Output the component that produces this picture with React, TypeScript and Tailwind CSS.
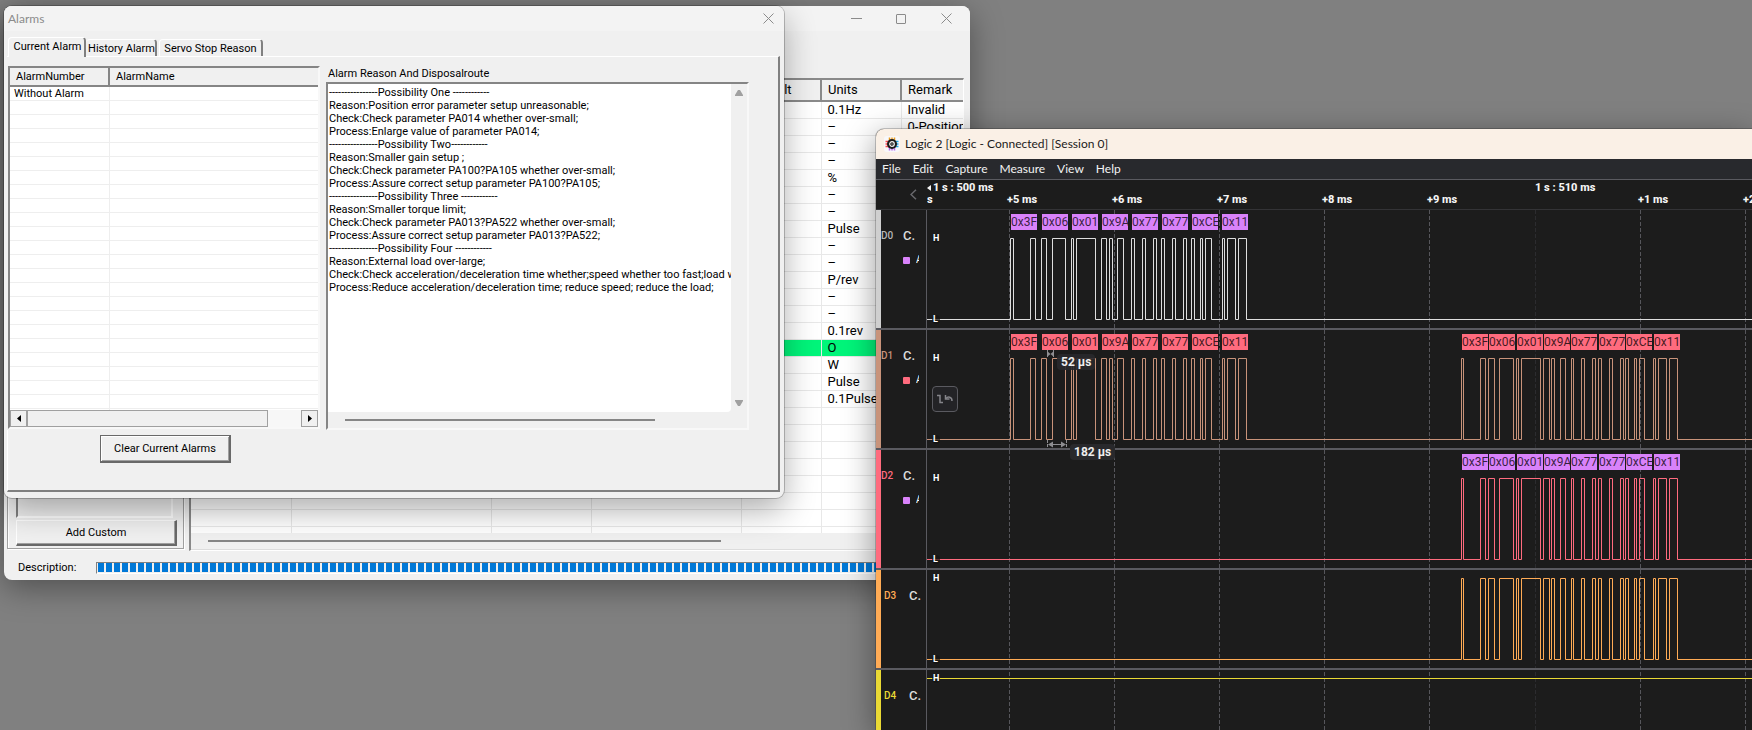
import React from "react";

const UI = "font-['Roboto','Liberation_Sans',sans-serif]";
const CAPTION = "font-['Lato','Open_Sans',sans-serif]";

/* ---------- shared window pieces ---------- */

function CloseIcon() {
  return (
    <svg width="11" height="11" viewBox="0 0 11 11" stroke="#8b8b8b" strokeWidth="1" fill="none" aria-hidden="true">
      <path d="M.5.5l10 10M10.5.5l-10 10" />
    </svg>
  );
}

/* ---------- parameter window ---------- */

const units = [
  "0.1Hz", "–", "–", "–", "%", "–", "–", "Pulse", "–", "–", "P/rev", "–", "–",
  "0.1rev", "O", "W", "Pulse", "0.1Pulse",
];
const remarks = ["Invalid", "0-Position"];
const paramHead = ["No.", "Name", "Value", "Range", "Default", "Units", "Remark"];

function ParameterTable() {
  return (
    <div className="flex min-w-0 flex-1 flex-col overflow-hidden border-t-2 border-r border-b border-l-2 border-t-[#8a8a8a] border-r-white border-b-white border-l-[#8a8a8a] bg-white">
      <div className="min-h-0 flex-1 overflow-hidden">
        <table className="w-[811px] table-fixed border-collapse text-[13px] leading-4 text-black">
          <colgroup>
            <col className="w-[100px]" />
            <col className="w-[200px]" />
            <col className="w-[100px]" />
            <col className="w-[150px]" />
            <col className="w-[80px]" />
            <col className="w-[80px]" />
            <col className="w-[101px]" />
          </colgroup>
          <thead>
            <tr className="h-[21px]">
              {paramHead.map((h) => (
                <th
                  key={h}
                  className={`overflow-hidden border-r-2 border-b-2 border-[#8a8a8a] bg-[#f0f0f0] p-0 text-left font-normal whitespace-nowrap ${h === "Default" ? "pl-2" : "pl-1.5"}`}
                >
                  {h}
                </th>
              ))}
            </tr>
          </thead>
          <tbody>
            {Array.from({ length: 26 }, (_, r) => (
              <tr key={r} className={r === 14 ? "h-[17px] bg-[#00f57a]" : "h-[17px]"}>
                {paramHead.map((h, c) => (
                  <td
                    key={h}
                    className="overflow-hidden border-r border-b border-[#e8e8e8] p-0 pl-1.5 whitespace-nowrap"
                  >
                    {c === 5 ? units[r] : c === 6 ? remarks[r] : null}
                  </td>
                ))}
              </tr>
            ))}
          </tbody>
        </table>
      </div>
      <div className="flex h-[17px] items-center border-b border-[#dcdcdc] bg-[#f0f0f0] pl-[17px]">
        <div className="h-0.5 w-[513px] bg-[#868686]" />
      </div>
    </div>
  );
}

function ParameterWindow() {
  return (
    <section
      aria-label="Parameters"
      className={`absolute top-1.5 left-1 flex h-[574px] w-[966px] flex-col overflow-hidden rounded-lg bg-[#f0f0f0] shadow-[0_8px_32px_rgba(0,0,0,0.38)] ${UI}`}
    >
      <header className="flex h-[25px] items-center justify-end gap-[34px] bg-[#f3f3f3] pr-[18px]">
        <button aria-label="Minimize" className="flex h-6 w-[11px] items-center">
          <span className="h-px w-[11px] bg-[#8b8b8b]" />
        </button>
        <button aria-label="Maximize" className="flex h-6 w-[11px] items-center">
          <span className="h-2.5 w-2.5 rounded-[1px] border border-[#8b8b8b]" />
        </button>
        <button aria-label="Close" className="flex h-6 w-[11px] items-center">
          <CloseIcon />
        </button>
      </header>
      <div className="flex min-h-0 flex-1 gap-[5px] pt-[47px] pr-1.5 pl-[3px]">
        <aside className="mb-0.5 flex w-[177px] flex-col border border-[#a0a0a0] px-2 pb-0.5 shadow-[inset_1px_1px_0_#fff,1px_1px_0_#fff]">
          <div className="mr-0.5 flex-1 border-2 border-t-[#808080] border-r-white border-b-white border-l-[#808080] bg-[#f0f0f0]" />
          <button className="mt-0.5 h-[26px] w-[161px] border-t border-r-2 border-b-2 border-l border-t-white border-r-[#696969] border-b-[#696969] border-l-white pt-px text-[11px] shadow-[inset_-1px_-1px_0_#a0a0a0]">
            Add Custom
          </button>
        </aside>
        <ParameterTable />
      </div>
      <footer className="flex h-[29px] items-center pt-1 pr-1.5 pl-3.5">
        <label htmlFor="progress" className="w-[78px] pt-px text-[11px]">
          Description:
        </label>
        <div
          id="progress"
          role="progressbar"
          aria-label="Description"
          className="flex h-3 flex-1 items-center border border-t-[#808080] border-r-white border-b-white border-l-[#808080] px-px"
        >
          <div className="h-[9px] flex-1 bg-[repeating-linear-gradient(90deg,#0078d7_0px_6px,#f0f0f0_6px_8px)]" />
        </div>
      </footer>
    </section>
  );
}

/* ---------- alarms window ---------- */

const alarmText = `----------------Possibility One ------------
Reason:Position error parameter setup unreasonable;
Check:Check parameter PA014 whether over-small;
Process:Enlarge value of parameter PA014;
----------------Possibility Two------------
Reason:Smaller gain setup ;
Check:Check parameter PA100?PA105 whether over-small;
Process:Assure correct setup parameter PA100?PA105;
----------------Possibility Three ------------
Reason:Smaller torque limit;
Check:Check parameter PA013?PA522 whether over-small;
Process:Assure correct setup parameter PA013?PA522;
----------------Possibility Four ------------
Reason:External load over-large;
Check:Check acceleration/deceleration time whether;speed whether too fast;load whether too large;
Process:Reduce acceleration/deceleration time; reduce speed; reduce the load;`;

function AlarmList() {
  return (
    <div className="flex h-[363px] w-[312px] flex-col border-2 border-t-[#858585] border-r-[#f8f8f8] border-b-[#f8f8f8] border-l-[#858585] bg-white">
      <div className="min-h-0 flex-1 overflow-hidden">
        <table className="w-full table-fixed border-collapse text-[11px] leading-[13px]">
          <colgroup>
            <col className="w-[99px]" />
            <col />
          </colgroup>
          <thead>
            <tr className="h-[18px] border-b-2 border-[#858585] bg-[#f0f0f0]">
              <th className="border-r-2 border-[#858585] p-0 pl-1.5 text-left font-normal">AlarmNumber</th>
              <th className="p-0 pl-1.5 text-left font-normal">AlarmName</th>
            </tr>
          </thead>
          <tbody>
            {Array.from({ length: 24 }, (_, r) => (
              <tr key={r} className="h-3.5">
                <td className="border-r border-b border-[#eeeeee] p-0 pl-1 whitespace-nowrap">
                  {r === 0 ? "Without Alarm" : null}
                </td>
                <td className="border-b border-[#eeeeee] p-0" />
              </tr>
            ))}
          </tbody>
        </table>
      </div>
      <div className="flex h-[17px] bg-[#f7f7f7]">
        <button aria-label="Scroll left" className="flex w-[17px] items-center justify-center border border-[#a0a0a0] bg-[#f0f0f0]">
          <svg width="4" height="7" viewBox="0 0 4 7" aria-hidden="true">
            <path d="M4 0v7L0 3.500z" />
          </svg>
        </button>
        <div className="w-[241px] border border-[#a0a0a0] bg-[#f0f0f0]" />
        <button aria-label="Scroll right" className="ml-auto flex w-[17px] items-center justify-center border border-[#a0a0a0] bg-[#f0f0f0]">
          <svg width="4" height="7" viewBox="0 0 4 7" aria-hidden="true">
            <path d="M0 0v7l4-3.500z" />
          </svg>
        </button>
      </div>
    </div>
  );
}

function AlarmReason() {
  return (
    <div className="flex w-[423px] flex-col text-[11px]">
      <label htmlFor="reason" className="h-4 pt-px pl-0.5 leading-[14px]">
        Alarm Reason And Disposalroute
      </label>
      <div className="flex h-[348px] flex-col border-2 border-t-[#858585] border-r-[#f8f8f8] border-b-[#f8f8f8] border-l-[#858585] bg-[#f0f0f0]">
        <div className="flex min-h-0 flex-1">
          <textarea
            id="reason"
            readOnly
            wrap="off"
            defaultValue={alarmText}
            className="min-w-0 flex-1 resize-none overflow-hidden rounded-br bg-white pt-0.5 pr-0.5 pl-px text-[11px] leading-[13px] text-black outline-none"
          />
          <div className="flex w-4 flex-col items-center justify-between pt-1.5 pb-1.5">
            <svg width="8" height="6" viewBox="0 0 8 6" fill="#a0a0a0" aria-hidden="true">
              <path d="M3 0h2l3 5v1H0V5z" />
            </svg>
            <svg width="8" height="6" viewBox="0 0 8 6" fill="#a0a0a0" aria-hidden="true">
              <path d="M3 6h2l3-5V0H0v1z" />
            </svg>
          </div>
        </div>
        <div className="flex h-4 items-center pl-[17px]">
          <div className="h-0.5 w-[310px] bg-[#868686]" />
        </div>
      </div>
    </div>
  );
}

function AlarmsWindow() {
  return (
    <section
      aria-label="Alarms"
      className={`absolute top-1.5 left-1 flex w-[780px] flex-col rounded-lg bg-[#f0f0f0] pb-[6px] text-black shadow-[0_0_0_1px_rgba(0,0,0,0.22),0_12px_32px_rgba(0,0,0,0.32)] ${UI}`}
    >
      <header className="flex h-[25px] items-center justify-between rounded-t-lg bg-[#f3f3f3] pr-2.5 pl-1">
        <h2 className={`text-[12px] text-[#8b8b8b] ${CAPTION}`}>Alarms</h2>
        <button aria-label="Close">
          <CloseIcon />
        </button>
      </header>
      <div role="tablist" className="flex h-[25px] items-end pt-1.5 pl-1 text-[11px] leading-[14px]">
        <button role="tab" aria-selected="true" className="z-10 -mb-px h-5 w-[78px] rounded-t-sm border-t border-r-2 border-l border-t-white border-r-[#808080] border-l-white bg-[#f0f0f0] pb-0.5 pl-0.5">
          Current Alarm
        </button>
        <button role="tab" aria-selected="false" className="h-[17px] w-[71px] rounded-t-sm border-t border-r-2 border-t-white border-r-[#808080] pt-px pl-0.5">
          History Alarm
        </button>
        <button role="tab" aria-selected="false" className="ml-0.5 h-[17px] w-[104px] rounded-t-sm border-t border-r-2 border-l border-t-white border-r-[#808080] border-l-white pt-px">
          Servo Stop Reason
        </button>
      </div>
      <div className="mr-1 ml-[3px] h-[436px] border-t border-r-2 border-b-2 border-l border-t-white border-r-[#808080] border-b-[#808080] border-l-white">
        <div className="-ml-px flex gap-[6px] bg-[#f0f0f0] pt-[9px] pl-px">
          <AlarmList />
          <AlarmReason />
        </div>
        <button className="mt-[5px] ml-[92px] h-7 w-[131px] border border-r-2 border-b-2 border-[#696969] pt-px text-[11px] shadow-[inset_1px_1px_0_#fff,inset_-1px_-1px_0_#a0a0a0]">
          Clear Current Alarms
        </button>
      </div>
    </section>
  );
}

/* ---------- logic analyser window ---------- */

type Burst = number[][];

const burstA: Burst = [
  [83, 86], [103, 108], [114, 119], [125, 138], [144, 146], [149, 168], [174, 179], [182, 185],
  [190, 196], [204, 207], [215, 218], [226, 229], [234, 237], [245, 248], [256, 259], [264, 267],
  [273, 275], [278, 284], [295, 297], [300, 308], [311, 319],
];
const burstB: Burst = [
  [534, 536], [553, 558], [561, 567], [572, 586], [589, 591], [594, 613], [616, 622], [624, 627],
  [633, 638], [644, 646], [654, 657], [665, 668], [671, 674], [682, 685], [693, 696], [698, 701],
  [707, 709], [712, 717], [726, 728], [731, 739], [742, 750],
];

const words = ["0x3F", "0x06", "0x01", "0x9A", "0x77", "0x77", "0xCE", "0x11"];
const framesA = [84, 115, 145, 175, 205, 235, 265, 295];
const framesB = [535, 562, 590, 617, 644, 672, 699, 727];

const gridX = [82, 187, 292, 397, 502, 608, 713, 818];
const gridText = ["+5 ms", "+6 ms", "+7 ms", "+8 ms", "+9 ms", "", "+1 ms", "+2 ms"];

function wavePath(pulses: Burst, high: number, low: number) {
  let d = `M0 ${low + 0.5}`;
  for (const [a, b] of pulses) {
    d += `H${a + 0.5}V${high + 0.5}H${b + 0.5}V${low + 0.5}`;
  }
  return d + "H5000";
}

function Frames({ xs, className }: { xs: number[]; className: string }) {
  return (
    <>
      {xs.map((x, i) => (
        <span
          key={x}
          style={{ left: x }}
          className={`absolute top-1 h-4 w-[26px] overflow-hidden text-[12px] leading-4 whitespace-nowrap text-black/75 ${className}`}
        >
          {words[i]}
        </span>
      ))}
    </>
  );
}

interface LaneProps {
  id: string;
  bar: string;
  text: string;
  stroke: string;
  size: string;
  high: number;
  low: number;
  path: string;
  square?: string;
  children?: React.ReactNode;
}

function Mark({ y, children }: { y: number; children: React.ReactNode }) {
  return (
    <span
      style={{ top: y - 4 }}
      className="absolute left-[5px] h-[9px] w-2 rounded-sm bg-[#141414]/70 pl-px text-[9px] leading-[9px] font-bold text-white"
    >
      {children}
    </span>
  );
}

function Lane({ id, bar, text, stroke, size, high, low, path, square, children }: LaneProps) {
  return (
    <div className={`flex border-b-2 border-[#5a5a60] ${size}`}>
      <div className={`w-[5px] ${bar}`} />
      <div className="flex w-[45px] flex-col overflow-hidden pt-[18px]">
        <div className={square ? "flex items-center" : "flex items-center pl-[3px]"}>
          <span className={`text-[10px] leading-4 font-medium ${square ? "w-[22px]" : "w-[25px]"} ${text}`}>{id}</span>
          <span className="text-[13px] leading-4 font-medium text-[#dddddd]">C.</span>
        </div>
        {square && (
          <div className="mt-2.5 flex items-center gap-1.5 pl-[22px]">
            <span className={`h-[7px] w-[7px] rounded-[1px] ${square}`} />
            <span className="w-[3px] overflow-hidden text-[10px] leading-3 text-white">A</span>
          </div>
        )}
      </div>
      <div className="relative min-w-0 flex-1 border-l border-[#5a5a60]">
        <svg className="block h-full w-full overflow-hidden" fill="none" aria-hidden="true">
          <path d={path} stroke={stroke} strokeWidth="1" />
        </svg>
        <Mark y={high}>H</Mark>
        {low > 0 && <Mark y={low}>L</Mark>}
        {children}
      </div>
    </div>
  );
}

function Measurements() {
  return (
    <>
      <svg className="absolute top-[19px] left-[119px] h-[10px] w-[10px]" viewBox="0 0 10 10" fill="none" stroke="#8e8e92" aria-hidden="true">
        <path d="M1.500 1v8M7.500 1v8" strokeDasharray="3 1" />
        <path d="M1 2l3.500 3L1 8zM8 2L4.500 5 8 8z" fill="#8e8e92" stroke="none" />
      </svg>
      <span className="absolute top-6 left-[130px] rounded-sm bg-[#29292c]/90 px-1 text-[12px] leading-4 font-bold text-[#eeeeee]">
        52 µs
      </span>
      <svg className="absolute top-[109px] left-[119px] h-[10px] w-[22px]" viewBox="0 0 22 10" fill="none" stroke="#8e8e92" aria-hidden="true">
        <path d="M1.500 1v8M20.500 1v8" strokeDasharray="3 1" />
        <path d="M3 5.500h16" />
        <path d="M2 5.500l5-3v6zM20 5.500l-5-3v6z" fill="#8e8e92" stroke="none" />
      </svg>
      <span className="absolute top-[114px] left-[143px] z-20 rounded-sm bg-[#29292c] px-1 text-[12px] leading-4 font-bold text-[#eeeeee]">
        182 µs
      </span>
      <button aria-label="Glitch filter" className="absolute top-14 left-[5px] flex h-[26px] w-[26px] items-center justify-center rounded-sm border border-[#5a5a60] bg-[#232326]">
        <svg width="16" height="10" viewBox="0 0 16 10" fill="none" stroke="#85858a" strokeWidth="1.500" aria-hidden="true">
          <path d="M0 1.500h3v7h3" />
          <path d="M8.500 1v4h4" />
          <path d="M9 4.500c2-2.500 6-1.500 6 2.500" />
        </svg>
      </button>
    </>
  );
}

function ChipIcon() {
  return (
    <svg width="16" height="16" viewBox="0 0 16 16" aria-hidden="true">
      <rect width="16" height="16" rx="3" fill="#f8f8fa" />
      <path d="M5.500 1.500v3M8 1.500v3M10.500 1.500v3" stroke="#f0a020" strokeWidth="1.500" />
      <path d="M5.500 11.500v3M8 11.500v3M10.500 11.500v3" stroke="#b56cf0" strokeWidth="1.500" />
      <path d="M1.500 5.500h3M1.500 8h3M1.500 10.500h3" stroke="#ff4a50" strokeWidth="1.500" />
      <path d="M11.500 5.500h3M11.500 8h3M11.500 10.500h3" stroke="#1fa6e8" strokeWidth="1.500" />
      <circle cx="8" cy="8" r="5" fill="#1c1c1c" />
      <circle cx="8" cy="8" r="2.300" fill="#1c1c1c" stroke="#f4f4f4" strokeWidth="1.200" />
      <circle cx="8" cy="8" r=".7" fill="#bbb" />
    </svg>
  );
}

const purple = "bg-[#d982fa]";
const red = "bg-[#ff6b7e]";

function LogicWindow() {
  return (
    <section
      aria-label="Logic 2"
      className="absolute top-[129px] right-0 bottom-0 left-[876px] flex flex-col overflow-hidden rounded-tl-lg bg-[#1c1c1c] font-['Roboto',sans-serif] shadow-[0_0_0_1px_rgba(0,0,0,0.2),0_8px_32px_rgba(0,0,0,0.42)]"
    >
      <header className="flex h-[30px] shrink-0 items-center gap-[5px] bg-[#faf0e6] pl-2">
        <ChipIcon />
        <h1 className={`text-[12px] text-[#1a1a1a] ${CAPTION}`}>Logic 2 [Logic - Connected] [Session 0]</h1>
      </header>
      <nav className={`flex h-[21px] shrink-0 items-center gap-3 border-b border-[#5a5a60] bg-[#28292d] pl-1.5 text-[12px] text-[#f2f2f2] ${CAPTION}`}>
        {["File", "Edit", "Capture", "Measure", "View", "Help"].map((m) => (
          <button key={m}>{m}</button>
        ))}
      </nav>
      <div className="flex h-[30px] shrink-0 border-b border-[#333336]">
        <div className="flex w-[51px] items-center justify-end pr-2.5">
          <button aria-label="Back">
            <svg width="7" height="11" viewBox="0 0 7 11" fill="none" stroke="#68686c" strokeWidth="1.500" aria-hidden="true">
              <path d="M6 .8L1 5.500l5 4.700" />
            </svg>
          </button>
        </div>
        <div className="relative min-w-0 flex-1 overflow-hidden text-[11px] leading-3 font-extrabold whitespace-nowrap text-[#f4f4f4]">
          <span className="absolute top-0.5 left-0 flex items-center gap-0.5">
            <svg width="4" height="6" viewBox="0 0 4 6" fill="#f4f4f4" aria-hidden="true">
              <path d="M4 0v6L0 3z" />
            </svg>
            1 s : 500 ms
          </span>
          <span className="absolute top-3.5 left-0">s</span>
          <span className="absolute top-0.5 left-[608px]">1 s : 510 ms</span>
          {gridX.map((x, i) => (
            <span key={x} style={{ left: x - 2 }} className="absolute top-3.5">
              {gridText[i]}
            </span>
          ))}
        </div>
      </div>
      <div className="relative min-h-0 flex-1 overflow-hidden">
        <svg className="absolute top-0 left-[51px] h-full w-[calc(100%-51px)]" aria-hidden="true">
          {gridX.map((x, i) => (
            <line
              key={x}
              x1={x + 0.5}
              x2={x + 0.5}
              y1="0"
              y2="100%"
              stroke={i === 5 ? "#2c2c2f" : "#56565b"}
              strokeDasharray="4 2"
            />
          ))}
        </svg>
        <div className="relative">
          <Lane id="D0" bar="bg-[#cfcfcf]" text="text-[#b8b8b8]" stroke="#dedede" size="h-[120px]" high={28} low={109}
            path={wavePath(burstA, 28, 109)} square={purple}>
            <Frames xs={framesA} className={purple} />
          </Lane>
          <div className="relative z-10">
            <Lane id="D1" bar="bg-[#c8937a]" text="text-[#c8937a]" stroke="#c8937a" size="h-[120px]" high={28} low={109}
              path={wavePath([...burstA, ...burstB], 28, 109)} square={red}>
              <Frames xs={framesA} className={red} />
              <Frames xs={framesB} className={red} />
              <Measurements />
            </Lane>
          </div>
          <Lane id="D2" bar={red} text="text-[#ff6b7e]" stroke="#ff6b7e" size="h-[120px]" high={28} low={109}
            path={wavePath(burstB, 28, 109)} square={purple}>
            <Frames xs={framesB} className={purple} />
          </Lane>
          <Lane id="D3" bar="bg-[#ffab55]" text="text-[#ffab55]" stroke="#ffab55" size="h-[100px]" high={8} low={89}
            path={wavePath(burstB, 8, 89)} />
          <Lane id="D4" bar="bg-[#ead934]" text="text-[#ead934]" stroke="#ead934" size="h-[100px]" high={8} low={0}
            path="M0 8.500H5000" />
        </div>
      </div>
    </section>
  );
}

export default function App() {
  return (
    <main className="relative h-screen w-full overflow-hidden bg-[#808080]">
      <ParameterWindow />
      <AlarmsWindow />
      <LogicWindow />
    </main>
  );
}
